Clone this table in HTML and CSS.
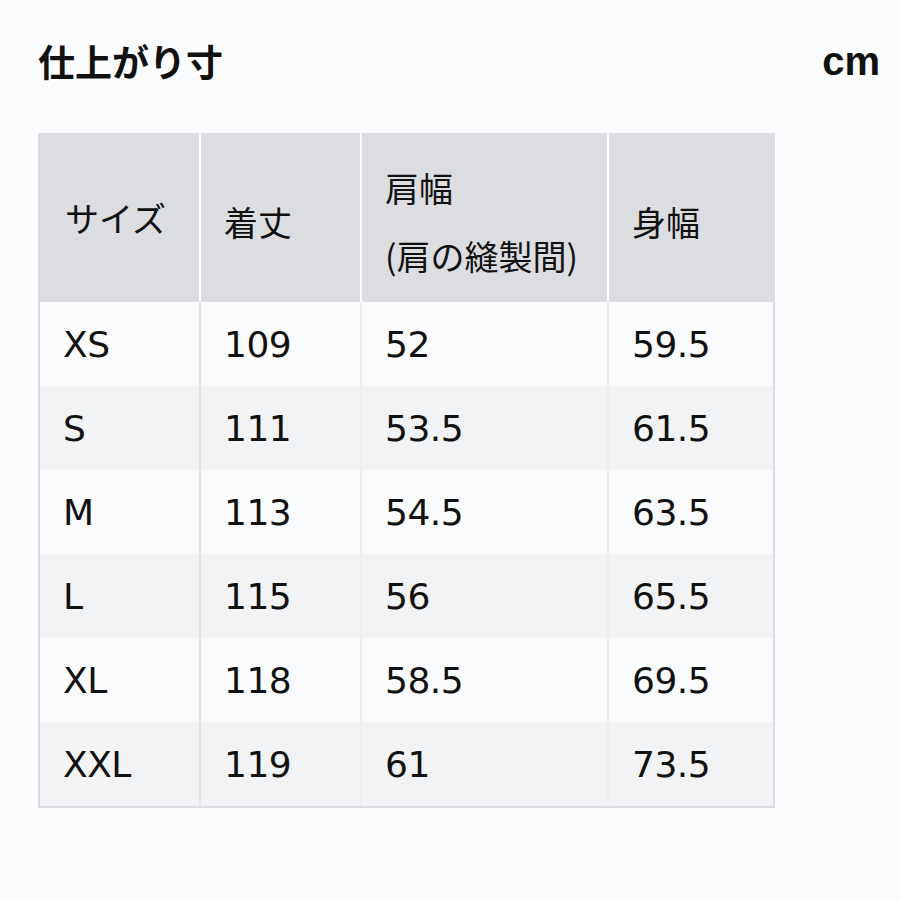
FILE: index.html
```html
<!DOCTYPE html>
<html lang="ja">
<head>
<meta charset="utf-8">
<link rel="stylesheet" href="styles.css">
</head>
<body>
<div class="page">
  <div class="titlebar">
    <h1 class="title">仕上がり寸</h1>
    <span class="unit">cm</span>
  </div>
  <div class="table">
    <div class="row head">
      <div class="cell">サイズ</div>
      <div class="cell">着丈</div>
      <div class="cell two"><span>肩幅</span><span>(肩の縫製間)</span></div>
      <div class="cell">身幅</div>
    </div>
    <div class="row odd"><div class="cell">XS</div><div class="cell">109</div><div class="cell">52</div><div class="cell">59.5</div></div>
    <div class="row even"><div class="cell">S</div><div class="cell">111</div><div class="cell">53.5</div><div class="cell">61.5</div></div>
    <div class="row odd"><div class="cell">M</div><div class="cell">113</div><div class="cell">54.5</div><div class="cell">63.5</div></div>
    <div class="row even"><div class="cell">L</div><div class="cell">115</div><div class="cell">56</div><div class="cell">65.5</div></div>
    <div class="row odd"><div class="cell">XL</div><div class="cell">118</div><div class="cell">58.5</div><div class="cell">69.5</div></div>
    <div class="row even"><div class="cell">XXL</div><div class="cell">119</div><div class="cell">61</div><div class="cell">73.5</div></div>
  </div>
</div>
</body>
</html>
```
FILE: styles.css
```css
html, body {
  margin: 0;
  padding: 0;
  background: #fbfcfd;
}
body {
  font-family: "DejaVu Sans", "Noto Sans CJK JP", sans-serif;
  color: #111;
}
.page {
  width: 900px;
  height: 900px;
  padding: 37px 20px 0 38px;
  box-sizing: border-box;
}
.titlebar {
  display: flex;
  justify-content: space-between;
  align-items: center;
  height: 48px;
}
.title {
  margin: 0;
  font-family: "Noto Sans CJK JP", sans-serif;
  font-size: 37px;
  font-weight: 700;
  line-height: 48px;
}
.unit {
  font-family: "Liberation Sans", sans-serif;
  font-size: 40px;
  font-weight: 700;
  line-height: 48px;
}
.table {
  margin-top: 48px;
  width: 737px;
  border: 2px solid #dcdde0;
  border-top: 0;
  box-sizing: border-box;
}
.row {
  display: grid;
  grid-template-columns: 159px 161px 247px 166px;
  height: 84px;
}
.row.head {
  height: 169px;
  background: #dcdde1;
  margin: 0 -2px;
  padding: 0 2px;
}
.cell {
  display: flex;
  align-items: center;
  padding-left: 23px;
  font-size: 36px;
  letter-spacing: -0.5px;
}
.cell + .cell {
  border-left: 2px solid #eceef0;
}
.row .cell:nth-child(2) {
  border-left-color: #e2e3e5;
}
.row.head .cell {
  font-family: "Noto Sans CJK JP", sans-serif;
  font-size: 34px;
  letter-spacing: 0;
  padding-left: 23px;
  padding-top: 8px;
  box-sizing: border-box;
}
.row.head .cell + .cell {
  border-left-color: #fbfcfd;
}
.row.head .cell:first-child {
  padding-top: 0;
  padding-left: 25px;
}
.cell.two {
  flex-direction: column;
  align-items: flex-start;
  justify-content: center;
  line-height: 68px;
}
.row.odd { background: #fafbfc; }
.row.even { background: #f1f3f4; }
```
